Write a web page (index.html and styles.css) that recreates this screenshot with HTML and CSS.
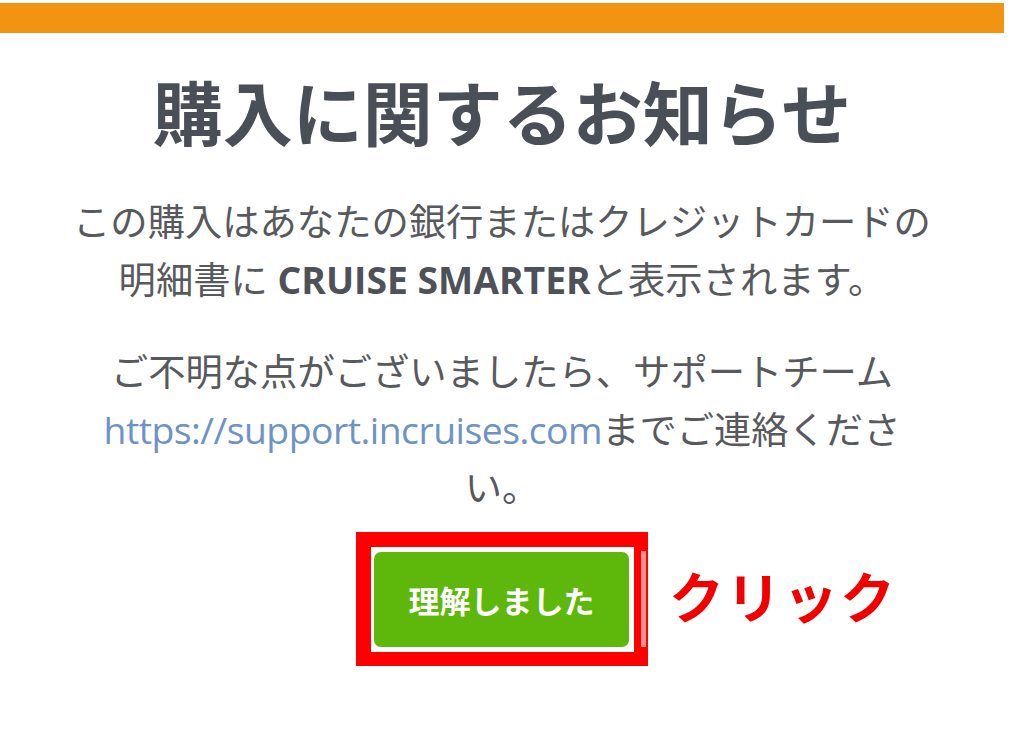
FILE: index.html
```html
<!DOCTYPE html>
<html lang="ja">
<head>
<meta charset="utf-8">
<title>購入に関するお知らせ</title>
<link rel="stylesheet" href="styles.css">
</head>
<body>
<div class="page">
  <div class="topbar"></div>
  <h1 class="title">購入に関するお知らせ</h1>
  <p class="msg">この購入はあなたの銀行またはクレジットカードの<br>明細書に <b class="brand">CRUISE SMARTER</b>と表示されます。</p>
  <p class="msg msg-support">ご不明な点がございましたら、サポートチーム<br><a class="link" href="#">https://support.incruises.com</a>までご連絡くださ<br>い。</p>
  <div class="action">
    <div class="highlight">
      <button class="ok-btn" type="button">理解しました</button>
    </div>
    <span class="click-note">クリック</span>
  </div>
</div>
</body>
</html>
```
FILE: styles.css
```css
html, body {
  margin: 0;
  padding: 0;
  background: #ffffff;
}

body {
  font-family: "Open Sans", "Noto Sans CJK JP", sans-serif;
  color: #57585c;
}

.page {
  width: 1004px;
  padding-top: 3px;
  display: flex;
  flex-direction: column;
  align-items: center;
}

.topbar {
  align-self: stretch;
  height: 30px;
  background: #f39312;
}

.title {
  margin: 36px 0 0;
  font-family: "Noto Sans CJK JP", sans-serif;
  font-size: 70px;
  line-height: 84px;
  font-weight: 700;
  color: #4a4e56;
  text-align: center;
}

.msg {
  margin: 40px 0 0;
  width: 880px;
  font-size: 37.3px;
  line-height: 58px;
  text-align: center;
  color: #58595d;
}

.msg-support {
  margin-top: 34px;
}

.brand {
  font-weight: 700;
  color: #4e5158;
}

.link {
  color: #6f92c6;
  text-decoration: none;
  letter-spacing: -0.5px;
}

.action {
  position: relative;
  margin-top: 15px;
}

.highlight {
  position: relative;
  width: 255px;
  height: 95px;
  border: 15px solid #fe0000;
  border-right-width: 14px;
  border-bottom-width: 14px;
  padding: 5px 5px 5px 3px;
  box-sizing: content-box;
  background: #ffffff;
}

.highlight::after {
  content: "";
  position: absolute;
  top: 4px;
  right: -12px;
  width: 5px;
  height: 96px;
  background: #ff8f8f;
}

.ok-btn {
  display: block;
  width: 255px;
  height: 95px;
  border: 0;
  border-radius: 7px;
  background: #5db80b;
  color: #ffffff;
  font-family: "Noto Sans CJK JP", sans-serif;
  font-size: 31px;
  font-weight: 700;
  padding: 0;
}

.click-note {
  position: absolute;
  left: 313px;
  top: 27px;
  white-space: nowrap;
  font-family: "Noto Sans CJK JP", sans-serif;
  font-size: 55px;
  line-height: 70px;
  font-weight: 700;
  color: #f20000;
  letter-spacing: 2px;
}
```
